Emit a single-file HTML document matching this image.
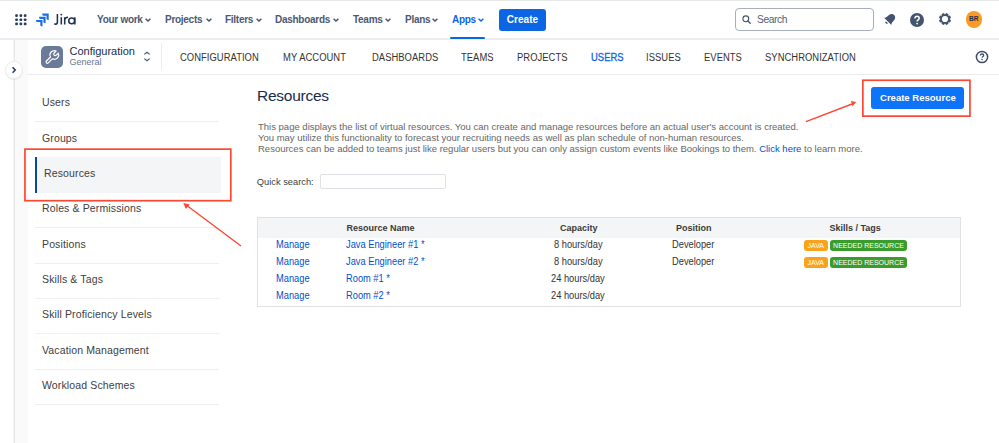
<!DOCTYPE html>
<html><head><meta charset="utf-8">
<style>
*{box-sizing:border-box;margin:0;padding:0}
html,body{width:999px;height:443px;overflow:hidden;background:#fff;font-family:"Liberation Sans",sans-serif}
.a{position:absolute;white-space:nowrap;line-height:1}
#topline{position:absolute;left:0;top:0;width:999px;height:1px;background:#E6EAE8}
#nav1b{position:absolute;left:0;top:38px;width:999px;height:2px;background:#EBEDF0}
.n1{font-size:10px;font-weight:bold;color:#4A5974;letter-spacing:-0.28px}
.chev{position:absolute;width:6px;height:4px}
.n2{font-size:10px;color:#333;letter-spacing:0.05px;transform:scaleX(0.94);transform-origin:0 0}
.sb{font-size:10.5px;color:#404040;letter-spacing:0.13px}
.sep{position:absolute;left:35px;width:184px;height:1px;background:#EEEFF2}
.desc{font-size:9.5px;color:#666}
.th{font-size:9px;font-weight:bold;color:#3a3a3a}
.td{font-size:10.2px;color:#333;transform:scaleX(0.912);transform-origin:0 0}
.lk{font-size:10.2px;color:#0052CC;transform:scaleX(0.912);transform-origin:0 0}
.badge{position:absolute;height:11px;border-radius:3px;color:#fff;font-size:7px;line-height:11px;text-align:center}
</style></head><body>
<div id="topline"></div>
<!-- grid icon -->
<svg class="a" style="left:15px;top:14px" width="12" height="12" viewBox="0 0 12 12" fill="#2C3E5D"><rect x="0.2" y="0.2" width="2.7" height="2.7" rx="0.8"/><rect x="4.5" y="0.2" width="2.7" height="2.7" rx="0.8"/><rect x="8.8" y="0.2" width="2.7" height="2.7" rx="0.8"/><rect x="0.2" y="4.4" width="2.7" height="2.7" rx="0.8"/><rect x="4.5" y="4.4" width="2.7" height="2.7" rx="0.8"/><rect x="8.8" y="4.4" width="2.7" height="2.7" rx="0.8"/><rect x="0.2" y="8.6" width="2.7" height="2.7" rx="0.8"/><rect x="4.5" y="8.6" width="2.7" height="2.7" rx="0.8"/><rect x="8.8" y="8.6" width="2.7" height="2.7" rx="0.8"/></svg>
<!-- jira logo -->
<svg class="a" style="left:35px;top:12px" width="16" height="16" viewBox="0 0 16 16" fill="#1D6CE0">
<g transform="translate(7.1,1.5)"><path d="M0.3 0 L6.6 0 L6.6 6.3 Q6.6 6.8 6.1 6.6 L4.9 6.1 Q4.4 5.9 4.4 5.4 L4.4 2.2 L1.2 2.2 Q0.7 2.2 0.5 1.7 L0 0.5 Q-0.1 0 0.3 0 Z"/></g>
<g transform="translate(4.0,4.7)"><path d="M0.3 0 L6.6 0 L6.6 6.3 Q6.6 6.8 6.1 6.6 L4.9 6.1 Q4.4 5.9 4.4 5.4 L4.4 2.2 L1.2 2.2 Q0.7 2.2 0.5 1.7 L0 0.5 Q-0.1 0 0.3 0 Z"/></g>
<g transform="translate(0.9,7.9)"><path d="M0.3 0 L6.6 0 L6.6 6.3 Q6.6 6.8 6.1 6.6 L4.9 6.1 Q4.4 5.9 4.4 5.4 L4.4 2.2 L1.2 2.2 Q0.7 2.2 0.5 1.7 L0 0.5 Q-0.1 0 0.3 0 Z"/></g>
</svg>
<svg class="a" style="left:50px;top:8px" width="30" height="20" viewBox="50 8 30 20"><g stroke="#1F3252" stroke-width="1.55" fill="none">
<path d="M57.4 14 L57.4 21.8 Q57.4 24.2 55.7 24.2 Q54.8 24.2 54.4 23.5"/>
<path d="M61.3 17.2 L61.3 24.5"/>
<path d="M64.7 24.5 L64.7 17.2 M64.7 19.6 Q65.3 17.3 68 17.3"/>
<circle cx="71.7" cy="20.85" r="2.95"/>
<path d="M74.85 17.2 L74.85 24.5"/>
</g><circle cx="61.3" cy="14.6" r="0.95" fill="#1F3252"/></svg>

<div class="a n1" style="left:97px;top:15px">Your work</div>
<div class="a n1" style="left:165px;top:15px">Projects</div>
<div class="a n1" style="left:225px;top:15px">Filters</div>
<div class="a n1" style="left:275px;top:15px">Dashboards</div>
<div class="a n1" style="left:353px;top:15px">Teams</div>
<div class="a n1" style="left:405px;top:15px">Plans</div>
<div class="a n1" style="left:452px;top:15px;color:#0C66E4">Apps</div>
<svg class="chev" style="left:145.1px;top:18px" viewBox="0 0 6 4"><path d="M0.6 0.7 L3 3 L5.4 0.7" stroke="#44546F" stroke-width="1.45" fill="none"/></svg>
<svg class="chev" style="left:205.7px;top:18.2px" viewBox="0 0 6 4"><path d="M0.6 0.7 L3 3 L5.4 0.7" stroke="#44546F" stroke-width="1.45" fill="none"/></svg>
<svg class="chev" style="left:255.7px;top:18.2px" viewBox="0 0 6 4"><path d="M0.6 0.7 L3 3 L5.4 0.7" stroke="#44546F" stroke-width="1.45" fill="none"/></svg>
<svg class="chev" style="left:332.7px;top:18.2px" viewBox="0 0 6 4"><path d="M0.6 0.7 L3 3 L5.4 0.7" stroke="#44546F" stroke-width="1.45" fill="none"/></svg>
<svg class="chev" style="left:385.2px;top:18.2px" viewBox="0 0 6 4"><path d="M0.6 0.7 L3 3 L5.4 0.7" stroke="#44546F" stroke-width="1.45" fill="none"/></svg>
<svg class="chev" style="left:431.7px;top:18.2px" viewBox="0 0 6 4"><path d="M0.6 0.7 L3 3 L5.4 0.7" stroke="#44546F" stroke-width="1.45" fill="none"/></svg>
<svg class="chev" style="left:478.2px;top:18.2px" viewBox="0 0 6 4"><path d="M0.6 0.7 L3 3 L5.4 0.7" stroke="#0C66E4" stroke-width="1.45" fill="none"/></svg>
<div class="a" style="left:450px;top:37px;width:35px;height:2px;background:#0C66E4;border-radius:1px;z-index:2"></div>
<div class="a" style="left:499px;top:8.5px;width:47px;height:22.2px;background:#0C66E4;border-radius:3px;color:#fff;font-size:10px;font-weight:bold;line-height:22.4px;text-align:center;letter-spacing:0.05px">Create</div>

<!-- search -->
<div class="a" style="left:735px;top:8px;width:139px;height:22.5px;border:1px solid #A7AFBC;border-radius:4px"></div>
<svg class="a" style="left:741px;top:14px" width="11" height="11" viewBox="0 0 11 11"><circle cx="4.8" cy="4.8" r="2.9" stroke="#44546F" stroke-width="1.1" fill="none"/><path d="M7 7 L9.2 9.2" stroke="#44546F" stroke-width="1.3" stroke-linecap="round"/></svg>
<div class="a" style="left:757px;top:15px;font-size:10.3px;color:#505F79;letter-spacing:-0.45px">Search</div>
<!-- bell -->
<svg class="a" style="left:882px;top:12px" width="15" height="15" viewBox="-7.5 -7.5 15 15"><g transform="translate(0.6,-0.4) rotate(45) scale(1.12)"><path d="M-4.6 3 C-3.6 2 -3.3 1 -3.3 -1.2 C-3.3 -3.6 -1.8 -5.2 0 -5.2 C1.8 -5.2 3.3 -3.6 3.3 -1.2 C3.3 1 3.6 2 4.6 3 Z" fill="#44546F"/><rect x="-1.3" y="4" width="2.6" height="1.3" rx="0.6" fill="#44546F"/></g></svg>
<!-- help -->
<svg class="a" style="left:910px;top:12.5px" width="14" height="14" viewBox="0 0 14 14"><circle cx="7" cy="7" r="7" fill="#44546F"/><path d="M4.9 5.5 C4.9 4.1 5.9 3.3 7 3.3 C8.2 3.3 9.2 4.1 9.2 5.3 C9.2 6.7 7.6 6.8 7.1 8 L7.1 8.6" stroke="#fff" stroke-width="1.5" fill="none"/><circle cx="7.1" cy="10.6" r="0.9" fill="#fff"/></svg>
<!-- settings -->
<svg class="a" style="left:937.7px;top:12px" width="14" height="14" viewBox="0 0 14 14"><path d="M11.79 7.25 L12.99 8.17 L12.06 10.41 L10.57 10.21 L10.21 10.57 L10.41 12.06 L8.17 12.99 L7.25 11.79 L6.75 11.79 L5.83 12.99 L3.59 12.06 L3.79 10.57 L3.43 10.21 L1.94 10.41 L1.01 8.17 L2.21 7.25 L2.21 6.75 L1.01 5.83 L1.94 3.59 L3.43 3.79 L3.79 3.43 L3.59 1.94 L5.83 1.01 L6.75 2.21 L7.25 2.21 L8.17 1.01 L10.41 1.94 L10.21 3.43 L10.57 3.79 L12.06 3.59 L12.99 5.83 L11.79 6.75 Z" fill="#44546F"/><circle cx="7" cy="7" r="3.1" fill="#fff"/></svg>
<!-- avatar -->
<div class="a" style="left:965.5px;top:11.2px;width:16.7px;height:16.7px;border-radius:50%;background:#FC9A24;color:#1F2C4C;font-size:6.6px;font-weight:bold;line-height:16.9px;text-align:center">BR</div>

<div id="nav1b"></div>

<!-- left rail -->
<div class="a" style="left:13px;top:40px;width:1px;height:403px;background:#F3F4F6"></div>
<div class="a" style="left:14px;top:40px;width:1px;height:403px;background:#E4E6EA"></div>
<div class="a" style="left:15px;top:40px;width:13px;height:403px;background:#FAFAFB"></div>
<div class="a" style="left:5px;top:61px;width:18px;height:18px;border-radius:50%;background:#fff;border:1px solid #ECEDF0;box-shadow:0 1px 1px rgba(9,30,66,0.08)"></div>
<svg class="a" style="left:11px;top:66px" width="6" height="8" viewBox="0 0 6 8"><path d="M1.6 1.3 L4.2 4 L1.6 6.7" stroke="#2C3E5D" stroke-width="1.6" fill="none"/></svg>

<!-- nav2 -->
<div class="a" style="left:28px;top:74px;width:971px;height:1px;background:#EBECF0"></div>
<div class="a" style="left:41px;top:45.5px;width:22px;height:22px;border-radius:5px;background:#6A7A99"></div>
<svg class="a" style="left:41px;top:45.5px" width="22" height="22" viewBox="0 0 22 22"><g transform="translate(13.3,9) rotate(-45)"><path d="M-9.8 -1.3 L-4.1 -1.3 A4.3 4.3 0 0 1 4.03 -1.5 L1.3 -1.5 A1.5 1.5 0 0 0 1.3 1.5 L4.03 1.5 A4.3 4.3 0 0 1 -4.1 1.3 L-9.8 1.3 A1.3 1.3 0 0 1 -9.8 -1.3 Z" stroke="#fff" stroke-width="1.2" fill="none" stroke-linejoin="round"/></g></svg>
<div class="a" style="left:69.5px;top:46px;font-size:11px;color:#172B4D">Configuration</div>
<div class="a" style="left:69.5px;top:58px;font-size:9px;color:#6B778C">General</div>
<svg class="a" style="left:143px;top:51px" width="8" height="11" viewBox="0 0 8 11"><path d="M1.3 3.4 L4 1.2 L6.7 3.4 M1.3 7.6 L4 9.8 L6.7 7.6" stroke="#44546F" stroke-width="1.1" fill="none"/></svg>
<div class="a" style="left:161px;top:43px;width:1px;height:27px;background:#EBECF0"></div>

<div class="a n2" style="left:179.5px;top:52.6px">CONFIGURATION</div>
<div class="a n2" style="left:282.5px;top:52.6px">MY ACCOUNT</div>
<div class="a n2" style="left:372px;top:52.6px">DASHBOARDS</div>
<div class="a n2" style="left:461px;top:52.6px">TEAMS</div>
<div class="a n2" style="left:517px;top:52.6px">PROJECTS</div>
<div class="a n2" style="left:591px;top:52.6px;color:#0C66E4;-webkit-text-stroke:0.3px #0C66E4">USERS</div>
<div class="a n2" style="left:646px;top:52.6px">ISSUES</div>
<div class="a n2" style="left:703.5px;top:52.6px">EVENTS</div>
<div class="a n2" style="left:765px;top:52.6px">SYNCHRONIZATION</div>
<svg class="a" style="left:975px;top:49.6px" width="14" height="14" viewBox="0 0 14 14"><circle cx="7" cy="7" r="5.6" stroke="#3B4B68" stroke-width="1.5" fill="none"/><path d="M5.3 5.6 C5.3 4.5 6.1 4 7 4 C8 4 8.7 4.6 8.7 5.4 C8.7 6.5 7.2 6.5 7.05 7.7" stroke="#3B4B68" stroke-width="1.3" fill="none"/><circle cx="7.05" cy="9.5" r="0.8" fill="#3B4B68"/></svg>

<!-- sidebar -->
<div class="a" style="left:35px;top:157px;width:186px;height:36px;background:#F4F5F7"></div>
<div class="a" style="left:35px;top:157px;width:2px;height:36px;background:#0747A6"></div>
<div class="sep" style="top:121px"></div>
<div class="sep" style="top:227px"></div>
<div class="sep" style="top:263px"></div>
<div class="sep" style="top:298px"></div>
<div class="sep" style="top:333px"></div>
<div class="sep" style="top:369px"></div>
<div class="sep" style="top:404px"></div>
<div class="a sb" style="left:42px;top:97.3px">Users</div>
<div class="a sb" style="left:42px;top:132.6px">Groups</div>
<div class="a sb" style="left:44px;top:168.0px">Resources</div>
<div class="a sb" style="left:42px;top:203.3px">Roles &amp; Permissions</div>
<div class="a sb" style="left:42px;top:238.6px">Positions</div>
<div class="a sb" style="left:42px;top:273.9px">Skills &amp; Tags</div>
<div class="a sb" style="left:42px;top:309.3px">Skill Proficiency Levels</div>
<div class="a sb" style="left:42px;top:344.6px">Vacation Management</div>
<div class="a sb" style="left:42px;top:379.9px">Workload Schemes</div>

<!-- main -->
<div class="a" style="left:257px;top:87.9px;font-size:15.5px;color:#172B4D;letter-spacing:-0.25px">Resources</div>
<div class="a" style="left:871px;top:86.6px;width:93.2px;height:22px;background:#0D73F7;border-radius:3px"></div>
<div class="a" style="left:879.5px;top:92.9px;color:#fff;font-size:9.9px;font-weight:bold;transform:scaleX(0.965);transform-origin:0 0">Create Resource</div>

<div class="a desc" style="left:258px;top:122px">This page displays the list of virtual resources. You can create and manage resources before an actual user's account is created.</div>
<div class="a desc" style="left:258px;top:132.8px">You may utilize this functionality to forecast your recruiting needs as well as plan schedule of non-human resources.</div>
<div class="a desc" style="left:258px;top:143.6px">Resources can be added to teams just like regular users but you can only assign custom events like Bookings to them. <span style="color:#0052CC">Click here</span> to learn more.</div>

<div class="a" style="left:256.8px;top:177.9px;font-size:9.3px;color:#3d3d3d">Quick search:</div>
<div class="a" style="left:320px;top:174.3px;width:126px;height:14.5px;border:1px solid #DFE1E6;border-radius:2px"></div>

<!-- table -->
<div class="a" style="left:257px;top:217px;width:704px;height:90px;border:1px solid #E0E1E4"></div>
<div class="a" style="left:258px;top:218px;width:702px;height:20px;background:#F4F5F7"></div>
<div class="a th" style="left:346.5px;top:224px">Resource Name</div>
<div class="a th" style="left:560px;top:224px">Capacity</div>
<div class="a th" style="left:676px;top:224px">Position</div>
<div class="a th" style="left:829.5px;top:224px">Skills / Tags</div>

<div class="a lk" style="left:275.6px;top:239.6px">Manage</div>
<div class="a lk" style="left:275.6px;top:256.6px">Manage</div>
<div class="a lk" style="left:275.6px;top:273.6px">Manage</div>
<div class="a lk" style="left:275.6px;top:290.6px">Manage</div>
<div class="a lk" style="left:345.6px;top:239.6px">Java Engineer #1 *</div>
<div class="a lk" style="left:345.6px;top:256.6px">Java Engineer #2 *</div>
<div class="a lk" style="left:345.6px;top:273.6px">Room #1 *</div>
<div class="a lk" style="left:345.6px;top:290.6px">Room #2 *</div>
<div class="a td" style="left:554px;top:239.6px">8 hours/day</div>
<div class="a td" style="left:554px;top:256.6px">8 hours/day</div>
<div class="a td" style="left:551px;top:273.6px">24 hours/day</div>
<div class="a td" style="left:551px;top:290.6px">24 hours/day</div>
<div class="a td" style="left:672px;top:239.6px">Developer</div>
<div class="a td" style="left:672px;top:256.6px">Developer</div>
<div class="badge" style="left:803.5px;top:239.8px;width:24.5px;background:#F9A21B">JAVA</div>
<div class="badge" style="left:830px;top:239.8px;width:77px;background:#3A9C2C">NEEDED RESOURCE</div>
<div class="badge" style="left:803.5px;top:256.5px;width:24.5px;background:#F9A21B">JAVA</div>
<div class="badge" style="left:830px;top:256.5px;width:77px;background:#3A9C2C">NEEDED RESOURCE</div>

<!-- annotations -->
<svg class="a" style="left:0;top:0" width="999" height="443" viewBox="0 0 999 443">
<rect x="24.95" y="149.15" width="205.85" height="51.55" stroke="#FC4832" stroke-width="1.7" fill="none"/>
<rect x="862.85" y="80.25" width="107.1" height="35.9" stroke="#FC4832" stroke-width="1.7" fill="none"/>
<path d="M806 121.6 L852 104" stroke="#FC4832" stroke-width="1.35" fill="none"/>
<path d="M856.3 102.1 L850.9 101.0 L852.5 106.2 Z" fill="#FC4832"/>
<path d="M241 246 L187.5 206" stroke="#FC4832" stroke-width="1.35" fill="none"/>
<path d="M183.3 203 L189.8 204.5 L185.9 209.1 Z" fill="#FC4832"/>
</svg>
</body></html>
